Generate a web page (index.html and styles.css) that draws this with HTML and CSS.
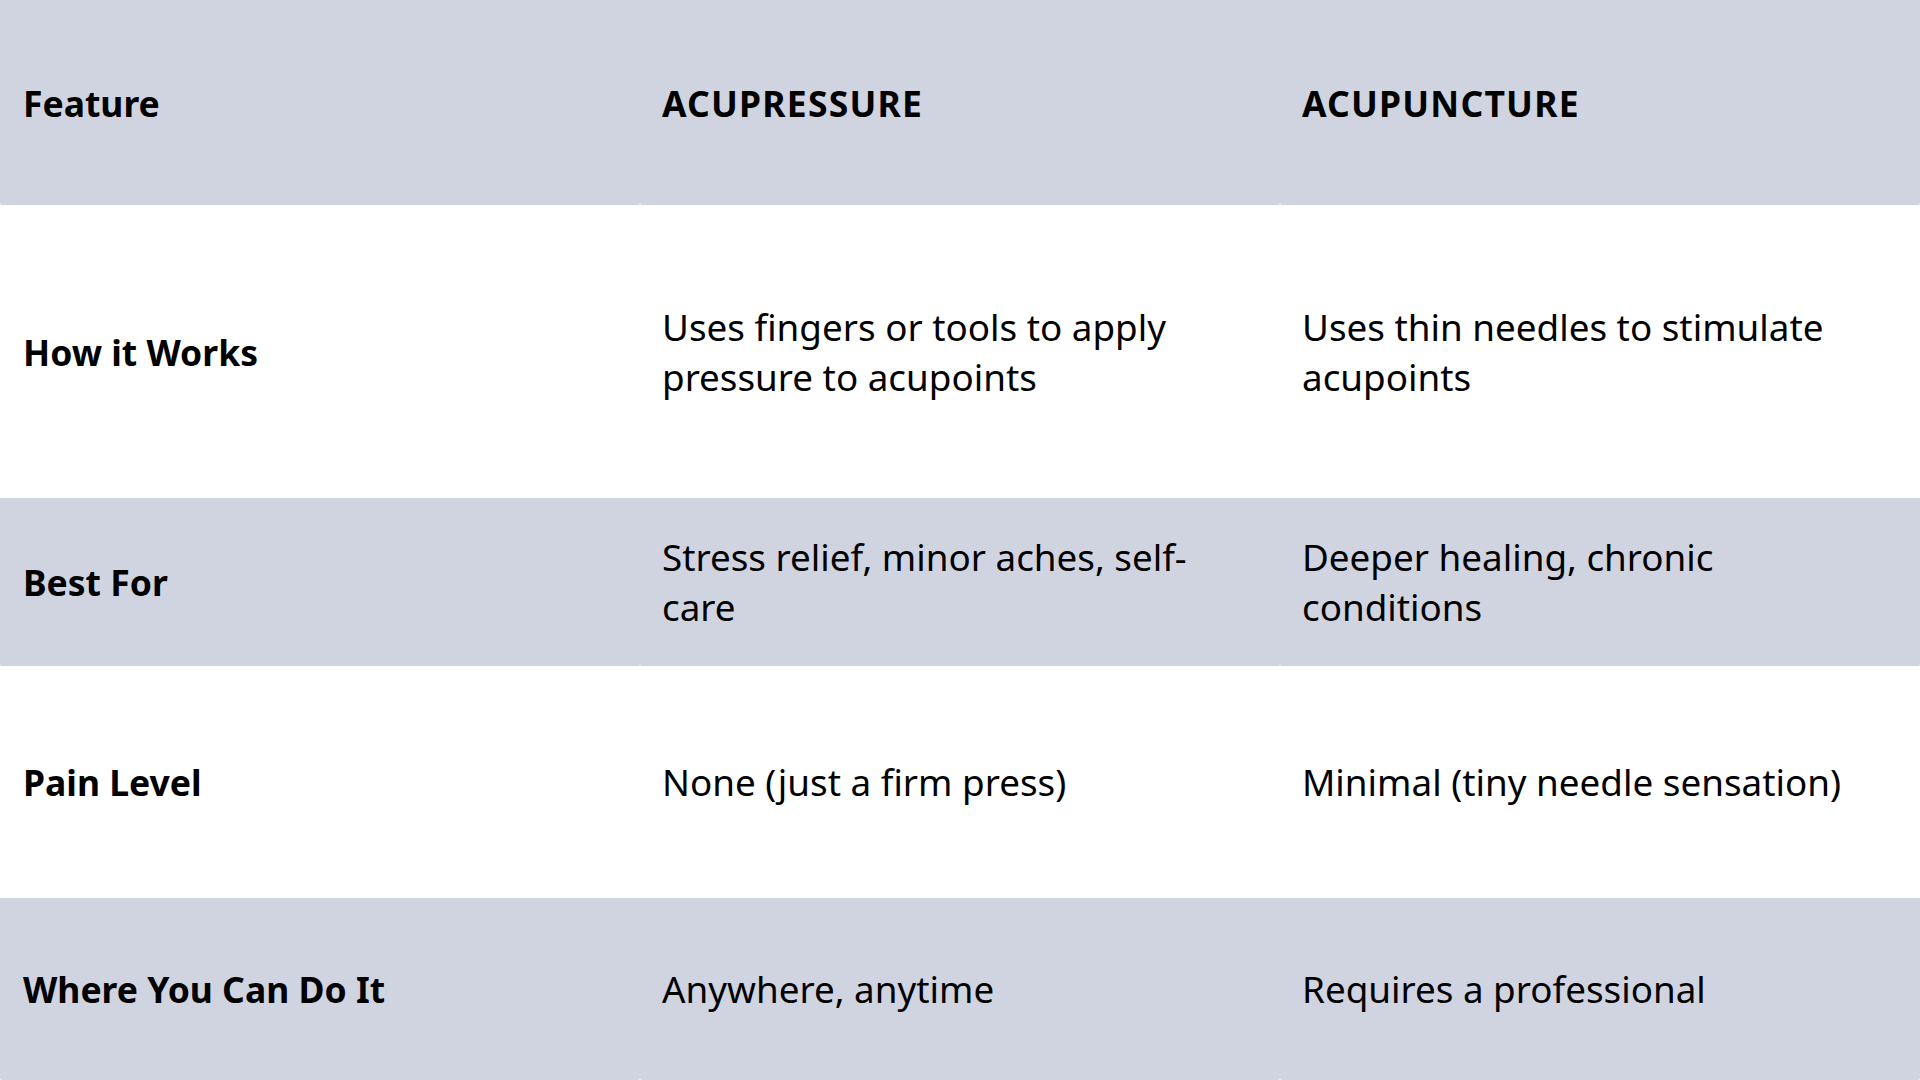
FILE: index.html
```html
<!DOCTYPE html>
<html lang="en">
<head>
<meta charset="utf-8">
<title>Acupressure vs Acupuncture</title>
<link rel="stylesheet" href="styles.css">
</head>
<body>
<div class="table">
  <div class="row r-head shade">
    <div class="cell label">Feature</div>
    <div class="cell label caps">ACUPRESSURE</div>
    <div class="cell label caps">ACUPUNCTURE</div>
  </div>
  <div class="row r-works">
    <div class="cell label">How it Works</div>
    <div class="cell">Uses fingers or tools to apply<br>pressure to acupoints</div>
    <div class="cell">Uses thin needles to stimulate<br>acupoints</div>
  </div>
  <div class="row r-best shade">
    <div class="cell label">Best For</div>
    <div class="cell">Stress relief, minor aches, self-<br>care</div>
    <div class="cell">Deeper healing, chronic<br>conditions</div>
  </div>
  <div class="row r-pain">
    <div class="cell label">Pain Level</div>
    <div class="cell">None (just a firm press)</div>
    <div class="cell">Minimal (tiny needle sensation)</div>
  </div>
  <div class="row r-where shade">
    <div class="cell label">Where You Can Do It</div>
    <div class="cell">Anywhere, anytime</div>
    <div class="cell">Requires a professional</div>
  </div>
</div>
</body>
</html>
```
FILE: styles.css
```css
html, body {
  margin: 0;
  padding: 0;
  background: #ffffff;
}
body {
  font-family: "Noto Sans", "Open Sans", sans-serif;
  color: #000000;
}
.table {
  width: 1920px;
  height: 1080px;
  display: flex;
  flex-direction: column;
}
.row {
  display: grid;
  grid-template-columns: 640px 640px 640px;
}
.r-head { height: 205px; }
.r-works { height: 293px; }
.r-best { height: 168px; }
.r-pain { height: 232px; }
.r-where { height: 182px; }
.cell {
  display: flex;
  align-items: center;
  padding: 0 20px 0 22px;
  font-size: 36.8px;
  line-height: 50px;
  font-weight: 400;
}
.row .cell:first-child { padding-left: 23px; }
.shade .cell {
  background: #d0d4e1;
  border-radius: 0 0 2px 2px;
}
.label {
  font-weight: 700;
  font-size: 35.5px;
}
.caps {
  letter-spacing: 1.2px;
}
```
